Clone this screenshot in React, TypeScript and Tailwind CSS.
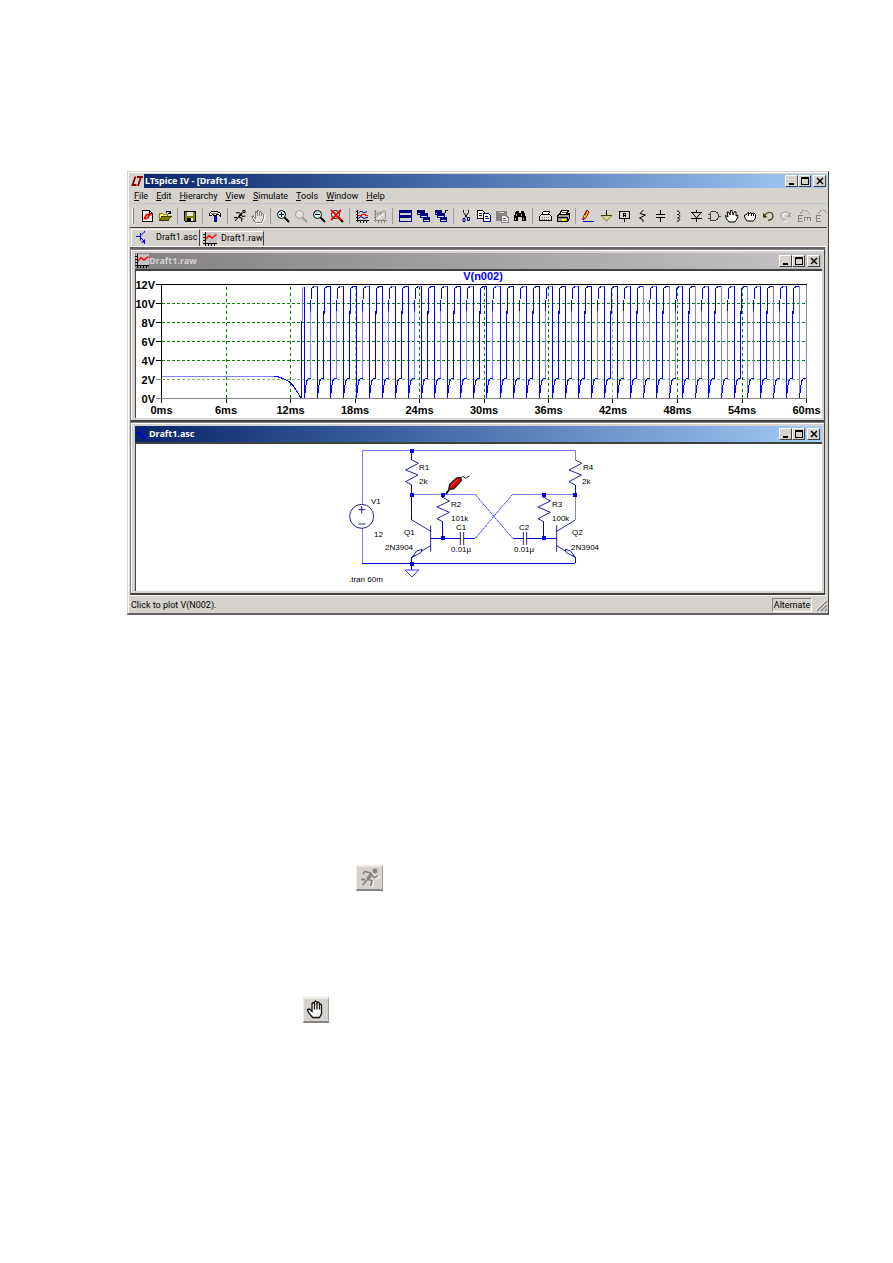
import type { ReactNode } from "react";

const UI = "font-['Roboto','Liberation_Sans',sans-serif] text-[9px]";

function Glyph({ children }: { children: ReactNode }) {
  return (
    <svg viewBox="0 0 16 16" className="block size-4 shrink-0" fill="none" stroke="#000" strokeWidth="1" shapeRendering="crispEdges" aria-hidden="true">
      {children}
    </svg>
  );
}

const HAND = "M5 14L3 11L2 8.500L3.500 8L5 10V4.500L6 3.500L7 4.500V3L8 2L9 3V4L10 3L11 4V5.500L12 5L13 6V11L11.500 14Z";
const HAND_LINES = "M7 4.500V8M9 4V8M11 5.500V8";

function Magnifier({ color = "#000", mark = "#008080", fill = "#dff" }: { color?: string; mark?: string; fill?: string }) {
  return (
    <g shapeRendering="auto">
      <circle cx="6.5" cy="6.500" r="4" stroke={color} fill={fill} />
      <path d="M9.500 9.500L14 14" stroke={color} strokeWidth="2" />
      <path d="M5 5.500l2-1.500" stroke={mark} strokeWidth=".6" />
    </g>
  );
}

function TraceIcon() {
  return (
    <svg viewBox="0 0 14 14" className="block size-[14px] shrink-0" shapeRendering="crispEdges" aria-hidden="true">
      <rect x="1" width="13" height="11" fill="#c6c3c6" />
      <path d="M2.500 0V14M0 11.500H14" stroke="#000" fill="none" />
      <path d="M0 2.500H2M0 5.500H2M0 8.500H2M5.500 12V14M8.500 12V14M11.500 12V14" stroke="#000" fill="none" />
      <path d="M3 7L6 3.500L9 6L13.500 2.500" stroke="#f00" strokeWidth="1.500" fill="none" shapeRendering="auto" />
    </svg>
  );
}

function TransistorIcon() {
  return (
    <svg viewBox="0 0 14 14" className="block size-[14px] shrink-0" fill="none" stroke="#00f" aria-hidden="true">
      <path d="M1 5.500H5M5.500 2V9.500M6 4.500L9.500 1V0M6 7L9.500 10.500V13" />
      <path d="M6 11.500H10V8Z" fill="#00f" stroke="none" />
    </svg>
  );
}

type Tool = { label: string; icon: ReactNode };

const toolGroups: Tool[][] = [
  [
    {
      label: "New schematic",
      icon: (
        <Glyph>
          <path d="M3.500 2.500H10.500L13.500 5.500V13.500H3.500Z" fill="#fff" />
          <path d="M10.500 2.500V5.500H13.500" />
          <path d="M7.500 6.500L5.500 10.500H8M7.500 6.500H12.500M10.500 6.500L8.500 10.500" stroke="#f00" strokeWidth="1.800" shapeRendering="auto" />
        </Glyph>
      ),
    },
    {
      label: "Open",
      icon: (
        <Glyph>
          <path d="M2.500 12.500V5.500H5.500L6.500 6.500H10.500V8" fill="#ff8" stroke="#808000" />
          <path d="M2.500 12.500L5 8.500H14L11 12.500Z" fill="#808000" stroke="#404000" />
          <path d="M9 4.500L10 3.500H12L13.500 5.500M13.500 3V5.500H11" />
        </Glyph>
      ),
    },
  ],
  [
    {
      label: "Save",
      icon: (
        <Glyph>
          <path d="M2.500 3.500H13.500V13.500H3.500L2.500 12.500Z" fill="#808000" />
          <rect x="5" y="4" width="6" height="4" fill="#e4e4e4" stroke="none" />
          <rect x="5" y="10" width="6" height="3" fill="#000" stroke="none" />
          <rect x="9" y="10" width="2" height="3" fill="#fff" stroke="none" />
        </Glyph>
      ),
    },
  ],
  [
    {
      label: "Control panel",
      icon: (
        <Glyph>
          <path d="M2.500 7.500V5.500L4.500 3.500H10L13.500 5.500V8.500L11.500 6.500H10L9 7.500H7L6 6.500L4 8Z" fill="#fff" />
          <path d="M4 5.500H11" stroke="#808080" />
          <path d="M7 8H10V14H7Z" fill="#000080" stroke="none" />
          <path d="M8.500 8V13" stroke="#00f" />
        </Glyph>
      ),
    },
  ],
  [
    {
      label: "Run",
      icon: (
        <Glyph>
          <g shapeRendering="auto" strokeWidth="1.100">
            <path d="M9.500 5L6.500 9L3 13M8 5L4 4.500M9 6.500L10.500 8.500L13.500 8M7 9L10 10.500L9.500 13.500M2 9.500H5" />
            <circle cx="12" cy="3.500" r="1.200" />
            <path d="M10 5L7 8.500" strokeWidth="1.800" />
          </g>
        </Glyph>
      ),
    },
    {
      label: "Halt",
      icon: (
        <Glyph>
          <path d={HAND} stroke="#fff" transform="translate(1 1)" />
          <path d={HAND} stroke="#848284" fill="#e4e0d8" />
          <path d={HAND_LINES} stroke="#848284" />
        </Glyph>
      ),
    },
  ],
  [
    {
      label: "Zoom in",
      icon: (
        <Glyph>
          <Magnifier />
          <path d="M4 6.500H9M6.500 4V9" />
        </Glyph>
      ),
    },
    {
      label: "Pan",
      icon: (
        <Glyph>
          <Magnifier color="#999" mark="#fff" fill="#e4e0d8" />
        </Glyph>
      ),
    },
    {
      label: "Zoom out",
      icon: (
        <Glyph>
          <Magnifier />
          <path d="M4 6.500H9" />
        </Glyph>
      ),
    },
    {
      label: "Zoom to fit",
      icon: (
        <Glyph>
          <Magnifier />
          <path d="M2 2L12 12M12 2L2 12" stroke="#f00" strokeWidth="1.800" shapeRendering="auto" />
        </Glyph>
      ),
    },
  ],
  [
    {
      label: "Autorange",
      icon: (
        <Glyph>
          <path d="M3.500 2V14M2 12.500H15M2 3.500H3M2 6.500H3M2 9.500H3M6.500 13V15M9.500 13V15M12.500 13V15" />
          <path d="M4 5.500L6 3.500H8L10 5L13 3.500M4 10.500L7 8.500L10 10.500L14 9" stroke="#00007b" shapeRendering="auto" />
          <path d="M4 7.500H7L8 6.500H11L12 7.500H14" stroke="#f00" />
        </Glyph>
      ),
    },
    {
      label: "Pick visible traces",
      icon: (
        <Glyph>
          <path d="M3.500 2V14M2 12.500H15M2 3.500H3M2 6.500H3M2 9.500H3M6.500 13V15M9.500 13V15M12.500 13V15" stroke="#848284" />
          <path d="M5 9L7 4H9L8 7L11 3H13.500V10L11 12M5 4V7" stroke="#999" shapeRendering="auto" />
          <path d="M6 10L9 8L12 6" stroke="#fff" />
        </Glyph>
      ),
    },
  ],
  [
    {
      label: "Tile windows",
      icon: (
        <Glyph>
          <path d="M2.500 2.500H14.500V13.500H2.500ZM2.500 7.500H14.500" stroke="#000080" />
          <path d="M2 3.500H15M2 8.500H15" stroke="#000080" strokeWidth="2" />
        </Glyph>
      ),
    },
    {
      label: "Cascade windows",
      icon: (
        <Glyph>
          <path d="M2.500 2.500H9.500V6.500H2.500ZM5.500 5.500H12.500V9.500H5.500ZM8.500 9.500H14.500V13.500H8.500Z" stroke="#000080" fill="#d6d3ce" />
          <path d="M2 3.500H10M5 6.500H13M8 10.500H15" stroke="#000080" strokeWidth="2" />
        </Glyph>
      ),
    },
    {
      label: "Close all windows",
      icon: (
        <Glyph>
          <path d="M2.500 2.500H8.500V6.500H2.500ZM4.500 5.500H11.500V9.500H4.500ZM7.500 9.500H13.500V13.500H7.500Z" stroke="#000080" fill="#d6d3ce" />
          <path d="M2 3.500H9M4 6.500H12M7 10.500H14" stroke="#000080" strokeWidth="2" />
          <path d="M12 2.500H15M12.500 2V5" />
        </Glyph>
      ),
    },
  ],
  [
    {
      label: "Cut",
      icon: (
        <Glyph>
          <path d="M5.500 2V4.500L9 9.500M10.500 2V4.500L7 9.500" shapeRendering="auto" />
          <path d="M5 10.500h2v3h-2zM9.500 9.500h2v3h-2z" stroke="#00007b" shapeRendering="auto" />
        </Glyph>
      ),
    },
    {
      label: "Copy",
      icon: (
        <Glyph>
          <path d="M1.500 2.500H6.500L8.500 4.500V10.500H1.500Z" fill="#fff" />
          <path d="M3 5.500H6M3 7.500H6" />
          <path d="M7.500 5.500H12.500L14.500 7.500V13.500H7.500Z" fill="#fff" stroke="#000080" />
          <path d="M9 8.500H12M9 10.500H13" stroke="#000080" />
        </Glyph>
      ),
    },
    {
      label: "Paste",
      icon: (
        <Glyph>
          <path d="M2.500 3.500H12.500V12.500H2.500Z" fill="#848284" stroke="#848284" />
          <path d="M5 4.500H10" stroke="#d6d3ce" />
          <path d="M7.500 7.500H12L14.500 10V14.500H7.500Z" fill="#eee" stroke="#848284" />
          <path d="M9 10.500H12M9 12.500H13" stroke="#848284" />
        </Glyph>
      ),
    },
    {
      label: "Find",
      icon: (
        <Glyph>
          <path d="M4 3H7V5H9V3H12L14 9V13H10V9H6V13H2V9Z" fill="#000" stroke="none" />
          <path d="M4.500 6V8M9.500 6V8M3.500 10V12M11.500 10V12" stroke="#aaa" />
        </Glyph>
      ),
    },
  ],
  [
    {
      label: "Print setup",
      icon: (
        <Glyph>
          <path d="M4.500 6.500L6.500 3.500H12.500L11.500 6.500" fill="#fff" />
          <path d="M2.500 8.500L4.500 6.500H12.500L14.500 8.500V12.500H2.500Z" fill="#e4e0d8" />
          <path d="M5 9.500H12M5 11.500H12" stroke="#777" strokeDasharray="1 1" />
        </Glyph>
      ),
    },
    {
      label: "Print",
      icon: (
        <Glyph>
          <path d="M4.500 6.500L6.500 2.500H13.500L11.500 6.500" fill="#fff" />
          <path d="M7 4.500H12" stroke="#555" />
          <path d="M2.500 7.500L4.500 6.500H12.500L14.500 5.500V10.500L12.500 13.500H2.500Z" fill="#9c9a9c" />
          <path d="M2.500 9.500H12.500V13.500" />
          <path d="M7 11.500H11" stroke="#ff0" strokeWidth="2" />
        </Glyph>
      ),
    },
  ],
  [
    {
      label: "Draw wire",
      icon: (
        <Glyph>
          <g shapeRendering="auto">
            <path d="M7 2L3.500 8.500L3 12L6 9.500L9 4Z" fill="#ff0" stroke="#800000" />
            <path d="M7 3L5 7M3 12L4 9" stroke="#f00" strokeWidth="1.500" />
          </g>
          <path d="M3 13.500H14" stroke="#00f" />
        </Glyph>
      ),
    },
    {
      label: "Ground",
      icon: (
        <Glyph>
          <path d="M8.500 2V7" />
          <path d="M3 7.500H14L8.500 13Z" stroke="#808000" fill="#d6d3a0" shapeRendering="auto" />
          <path d="M3 7.500H14" stroke="#404000" />
        </Glyph>
      ),
    },
    {
      label: "Label net",
      icon: (
        <Glyph>
          <path d="M3.500 3.500H13.500V10.500H3.500ZM8.500 11V14" />
          <path d="M7.500 9V5.500H9.500V9M7 7.500H10" />
        </Glyph>
      ),
    },
    {
      label: "Resistor",
      icon: (
        <Glyph>
          <path d="M9.500 2L6 5.500L11.500 7L5.500 10L9 12V14" shapeRendering="auto" />
        </Glyph>
      ),
    },
    {
      label: "Capacitor",
      icon: (
        <Glyph>
          <path d="M8.500 2V6M8.500 10V14M4 6.500H13M4 9.500H13" />
        </Glyph>
      ),
    },
    {
      label: "Inductor",
      icon: (
        <Glyph>
          <path d="M7 3C11 3 10 6.500 7.500 6.500C11 6.500 10 10 7.500 10C11 10 10 13.500 7 13" shapeRendering="auto" />
        </Glyph>
      ),
    },
    {
      label: "Diode",
      icon: (
        <Glyph>
          <path d="M8.500 2V4M8.500 10V14M3 4.500H14M3 10.500H14" />
          <path d="M4 4.500L8.500 10L13 4.500" shapeRendering="auto" />
        </Glyph>
      ),
    },
    {
      label: "Component",
      icon: (
        <Glyph>
          <path d="M4.500 4V12.500H8C11 12.500 12.500 10 12.500 8C12.500 6 11 3.500 8 3.500H4.500M2 6.500H4M2 10.500H4M13 8.500H15" stroke="#444" />
        </Glyph>
      ),
    },
    {
      label: "Move",
      icon: (
        <Glyph>
          <path d="M5 14L2 10L1.500 7.500L4 9L3 4L4.500 4L6 7L6.500 2.500H8L9 7L10.500 3.500L12 4V8L13.500 7L14 9L11 14Z" fill="#fff" shapeRendering="auto" />
        </Glyph>
      ),
    },
    {
      label: "Drag",
      icon: (
        <Glyph>
          <path d="M5 13L2.500 9V7H4L5 5.500L6 4.500L7.500 5.500L9 4.500L10 5.500L12 5L13.500 6.500V10L11.500 13Z" fill="#fff" shapeRendering="auto" />
          <path d="M6.500 5V8M9 5V8M11.500 6V8" />
        </Glyph>
      ),
    },
    {
      label: "Undo",
      icon: (
        <Glyph>
          <g shapeRendering="auto">
            <path d="M5 7C7 3.500 13 3.500 13 8C13 11 10.500 12.500 8 12" stroke="#333300" strokeWidth="1.200" />
            <path d="M3 5V9.500H7.500Z" fill="#333300" stroke="none" />
          </g>
        </Glyph>
      ),
    },
    {
      label: "Redo",
      icon: (
        <Glyph>
          <g shapeRendering="auto">
            <path d="M13 8C10 4 4 4.500 4 9C4 12 6.500 13.500 9 13" stroke="#fff" strokeWidth="1.500" />
            <path d="M12 7C10 3 3 3.500 3 8C3 11 5.500 12.500 8 12" stroke="#aaa" strokeWidth="1.500" />
            <path d="M13 4V9H8Z" fill="#aaa" stroke="none" />
          </g>
        </Glyph>
      ),
    },
    {
      label: "Rotate",
      icon: (
        <Glyph>
          <path d="M7 7.500H2.500V13.500H7M3 10.500H6M8 9.500H15M8.500 9V13M11.500 9V12M14.500 9V13" stroke="#848284" />
          <path d="M4 5.500L7 2.500H11L13 5V7" stroke="#999" strokeDasharray="2 1" />
        </Glyph>
      ),
    },
    {
      label: "Mirror",
      icon: (
        <Glyph>
          <path d="M7 7.500H2.500V13.500H7M3 10.500H6" stroke="#848284" />
          <path d="M4 5.500L7 2.500H11L13 5" stroke="#999" strokeDasharray="2 1" />
        </Glyph>
      ),
    },
  ],
];

const raised = "border border-t-white border-l-white border-r-[#424142] border-b-[#424142] bg-[#d6d3ce]";

function CaptionButtons() {
  return (
    <div className="flex">
      <button type="button" aria-label="Minimize" className={`flex h-3 w-[13px] items-center justify-center ${raised}`}>
        <svg viewBox="0 0 10 10" className="size-[10px]" aria-hidden="true"><path d="M2 7H7V9H2Z" /></svg>
      </button>
      <button type="button" aria-label="Maximize" className={`flex h-3 w-[13px] items-center justify-center ${raised}`}>
        <svg viewBox="0 0 10 10" className="size-[10px]" fill="none" stroke="#000" shapeRendering="crispEdges" aria-hidden="true"><path d="M1.500 1.500H8.500V8.500H1.500ZM1 2.500H9" /></svg>
      </button>
      <button type="button" aria-label="Close" className={`ml-0.5 flex h-3 w-[13px] items-center justify-center ${raised}`}>
        <svg viewBox="0 0 10 10" className="size-[10px]" fill="none" stroke="#000" strokeWidth="1.500" aria-hidden="true"><path d="M2 2L8 8M8 2L2 8" /></svg>
      </button>
    </div>
  );
}

const AXIS = { left: 25.5, right: 670.5, top: 13.5, bottom: 127.5 };
const voltY = (v: number) => AXIS.bottom - (v / 12) * (AXIS.bottom - AXIS.top);
const timeX = (t: number) => AXIS.left + (t / 60) * (AXIS.right - AXIS.left);
const PERIOD = 13.034;
const cycles = Array.from({ length: 39 }, (_, i) => Math.round(168 + i * PERIOD) + 0.5);

function Plot() {
  return (
    <svg viewBox="0 0 686 147" className="block h-auto w-full bg-white" role="img" aria-label="Plot of V(n002)" shapeRendering="crispEdges">
      <g stroke="#008200" fill="none">
        {[2, 4, 6, 8, 10].map((v) => (
          <path key={v} d={`M${AXIS.left} ${Math.floor(voltY(v)) + 0.5}H${AXIS.right}`} strokeDasharray="3 2" stroke={v === 2 ? "#7fc07f" : "#008200"} />
        ))}
        {[6, 12, 18, 24, 30, 36, 42, 48, 54].map((t) => (
          <path key={t} d={`M${Math.floor(timeX(t)) + 0.5} 16V${AXIS.bottom}`} strokeDasharray="3 3" stroke={t === 18 || t === 42 ? "#7fc07f" : "#008200"} />
        ))}
      </g>
      <g stroke="#000" fill="none">
        <path d={`M${AXIS.left} ${AXIS.bottom}V${AXIS.top}H${AXIS.right}`} />
        <path d={`M${AXIS.left} ${AXIS.bottom}H${AXIS.right}V${AXIS.top}`} stroke="#848284" />
        {[0, 2, 4, 6, 8, 10, 12].map((v) => (
          <path key={v} d={`M20 ${Math.floor(voltY(v)) + 0.5}H26`} stroke={v === 0 || v === 2 ? "#848284" : "#000"} />
        ))}
        {[0, 6, 12, 18, 24, 30, 36, 42, 48, 54, 60].map((t) => (
          <path key={t} d={`M${Math.floor(timeX(t)) + 0.5} 128V132`} />
        ))}
      </g>
      <g fill="none" stroke="#0000ff">
        <path d="M26 105.500H138" stroke="#8080ff" />
        <path d="M138 105.500H141L147 107.500L153 110.500L157 114.500L161 120.500L165 127" />
        <path d="M165.500 127V50M168.500 15.500V127" />
        <path d="M166.500 50V15.500" stroke="#8080ff" />
        {cycles.map((x, i) => {
          const next = i < cycles.length - 1 ? cycles[i + 1] : AXIS.right;
          const last = i === cycles.length - 1;
          return (
            <g key={x}>
              <path d={`M${x} 127L${x + 1} 118L${x + 2} 110L${x + 4} 107.500H${x + 6}`} />
              {!last && (
                <>
                  <path d={`M${x + 6} 107V40`} stroke={i % 2 ? "#0000ff" : "#8080ff"} />
                  <path d={`M${x + 6} ${i % 2 ? 70 : 40}L${x + 7} 18L${x + 8} 16.500L${x + 10} 15.500H${next}`} />
                  <path d={`M${x + 9} 15.500H${next}`} stroke={i % 2 ? "#0000ff" : "#8080ff"} />
                  <path d={`M${next} 15V127`} stroke={i > 24 && i % 2 ? "#8080ff" : "#0000ff"} />
                </>
              )}
              {last && <path d={`M${AXIS.right} 107V76`} stroke="#8080ff" />}
            </g>
          );
        })}
      </g>
      <g className="font-['Liberation_Sans',sans-serif] text-[11px] font-bold" textAnchor="end">
        {[0, 2, 4, 6, 8, 10, 12].map((v) => (
          <text key={v} x="19" y={voltY(v) + 4}>{v}V</text>
        ))}
      </g>
      <g className="font-['Liberation_Sans',sans-serif] text-[11px] font-bold" textAnchor="middle">
        {[0, 6, 12, 18, 24, 30, 36, 42, 48, 54, 60].map((t) => (
          <text key={t} x={timeX(t)} y="143">{t}ms</text>
        ))}
        <text x="347" y="9" fill="#0000ff">V(n002)</text>
      </g>
    </svg>
  );
}

const partLabels: [number, number, string][] = [
  [283, 26, "R1"], [283, 40, "2k"], [235, 60, "V1"], [238, 93, "12"],
  [315, 63, "R2"], [315, 77, "101k"], [268, 91, "Q1"], [249, 106, "2N3904"],
  [320, 86, "C1"], [315, 108, "0.01µ"], [383, 86, "C2"], [378, 108, "0.01µ"],
  [416, 63, "R3"], [416, 77, "100k"], [436, 91, "Q2"], [435, 106, "2N3904"],
  [447, 26, "R4"], [446, 40, "2k"], [213, 138, ".tran 60m"],
];

const nodes: [number, number][] = [[216, 33], [216, 165], [309, 165], [309, 295], [612, 165], [612, 295], [706, 165], [216, 371]];

function Schematic() {
  return (
    <svg viewBox="0 0 686 147" className="block h-auto w-full bg-white" role="img" aria-label="Astable multivibrator schematic">
      <g transform="translate(204 -4) scale(.33333)" fill="none" strokeWidth="3">
        <g stroke="#7b7dff" shapeRendering="crispEdges">
          <path d="M67 193V31H706V60M67 265V370M216 165H407M516 165H706M706 165V240" />
        </g>
        <g stroke="#3c3cff">
          <path d="M407 165L518 295M406 295L516 165" strokeDasharray="9 2" />
        </g>
        <g stroke="#0000e0" shapeRendering="crispEdges">
          <path d="M67 370H706M216 31V60M216 135V240M309 245V295M612 245V295M706 135V165M216 352V390M706 352V370M272 295H360M371 295H406M518 295H549M560 295H650M309 165V174M612 165V174" />
        </g>
        <g stroke="#00008b" strokeWidth="2.600">
          <circle cx="65" cy="229" r="36" />
          <path d="M55 209H76M65 198V220M55 252H76" />
          <path d="M216 60L235 70L197 90L234 105L197 125L216 135" />
          <path d="M706 60L725 70L687 90L724 105L687 125L706 135" />
          <path d="M309 172L328 183L291 201L328 217L291 236L309 246" />
          <path d="M612 172L631 183L594 201L631 217L594 236L612 246" />
          <path d="M272 256V335M650 256V335M361 276V315M371 276V315M550 276V315M560 276V315" />
          <path d="M216 240L272 274M706 240L650 274M272 317L244 334M650 317L678 334M216 352L226 346M706 352L696 346" />
          <path d="M217 351L230 333L246 328L243 338ZM705 351L692 333L676 328L679 338Z" />
        </g>
        <path d="M195 390H236L216 411Z" stroke="#3434ff" />
        <g fill="#0000ff" shapeRendering="crispEdges">
          {nodes.map(([x, y]) => (
            <rect key={`${x}-${y}`} x={x - 6} y={y - 6} width="12" height="12" />
          ))}
        </g>
        <path d="M318 163L328 148" stroke="#000" strokeWidth="5" />
        <path d="M326 149L329 133L350 114L362 113L364 122L342 146Z" fill="#e00000" stroke="#222" strokeWidth="4" />
        <path d="M333 137L353 118" stroke="#ff5050" strokeWidth="3" />
        <path d="M360 116L368 109L377 115L389 107" stroke="#222" />
      </g>
      <g className="font-['Liberation_Sans',sans-serif] text-[8px]">
        {partLabels.map(([x, y, label], i) => (
          <text key={i} x={x} y={y}>{label}</text>
        ))}
      </g>
    </svg>
  );
}

function ChildWindow({ title, icon, active, children }: { title: string; icon: ReactNode; active?: boolean; children: ReactNode }) {
  return (
    <section className="border border-[#848284] border-r-[#424142] border-b-2 border-b-[#424142] bg-[#d6d3ce]">
      <div className="border border-t-white border-l-white border-r-[#d6d3ce] border-b-[#d6d3ce] pt-0.5 pr-px pb-px pl-[3px]">
        <header
          className={`flex h-4 items-center pr-0.5 ${active ? "bg-linear-to-r from-[#08246b] to-[#a5cbf7]" : "bg-linear-to-r from-[#848284] to-[#c6c3c6]"}`}
        >
          {icon}
          <h2 className={`flex-1 font-['Noto_Sans',sans-serif] text-[9px] leading-[14px] font-bold ${active ? "text-white" : "text-[#d6d3ce]"}`}>{title}</h2>
          <CaptionButtons />
        </header>
        <div className="border-t-2 border-l border-[#424142]">{children}</div>
      </div>
    </section>
  );
}

const menus = ["File", "Edit", "Hierarchy", "View", "Simulate", "Tools", "Window", "Help"];

export default function App() {
  return (
    <main className="min-h-screen bg-white pt-[171px] pb-60 text-black">
      <div className="mr-16 ml-[127px] border border-t-[#d6d3ce] border-r-[#424142] border-b-2 border-b-[#636163] border-l-[#d6d3ce] bg-[#d6d3ce]">
        <div className="border-t border-l border-white p-px pb-0">
          <header className="flex h-[14px] items-center bg-linear-to-r from-[#08246b] to-[#a5cbf7] pr-px">
            <svg viewBox="0 0 14 14" className="size-[14px] shrink-0" aria-hidden="true">
              <rect width="14" height="14" fill="#d6d3ce" />
              <path d="M5.500 2.500L2.500 11H6.500" fill="none" stroke="#840000" strokeWidth="1.800" />
              <path d="M7 3H13M11 3L8 12" fill="none" stroke="#840000" strokeWidth="1.800" />
            </svg>
            <h1 className="ml-px flex-1 font-['Noto_Sans',sans-serif] text-[9px] leading-[14px] font-bold text-white">LTspice IV - [Draft1.asc]</h1>
            <CaptionButtons />
          </header>
          <nav className={`flex h-4 items-center gap-2 border-b border-[#bdc3ce] pl-1 leading-3 ${UI}`}>
            {menus.map((m) => (
              <button key={m} type="button">
                <span className="underline">{m[0]}</span>
                {m.slice(1)}
              </button>
            ))}
          </nav>
          <div className="flex h-6 items-center overflow-hidden border-b border-[#424142]" role="toolbar" aria-label="Standard">
            <span className="ml-0.5 h-4 w-0.5 shrink-0 border-r border-l border-r-[#848284] border-l-white" />
            <div className="ml-1 flex min-w-0 flex-1 overflow-hidden">
              {toolGroups.map((group, g) => (
                <div key={g} className="flex shrink-0 items-center">
                  {g > 0 && <span className="mx-[3px] h-4 w-px bg-[#9c9a9c]" />}
                  {group.map((tool) => (
                    <button key={tool.label} type="button" aria-label={tool.label} className="flex w-[18px] shrink-0 justify-center">
                      {tool.icon}
                    </button>
                  ))}
                </div>
              ))}
            </div>
          </div>
          <div className={`flex h-[19px] items-end gap-px border-b border-white pl-px ${UI}`} role="tablist">
            <button type="button" role="tab" aria-selected="true" className="flex h-[17px] w-[69px] items-center gap-[7px] border-t border-r border-l border-t-white border-r-[#424142] border-l-white pb-px pl-[3px]">
              <TransistorIcon />
              Draft1.asc
            </button>
            <button type="button" role="tab" aria-selected="false" className="flex h-[15px] w-[63px] items-center gap-1 border border-t-white border-r-[#424142] border-b-transparent border-l-white pl-px">
              <TraceIcon />
              Draft1.raw
            </button>
          </div>
          <div className="mr-0.5 border-t-2 border-[#636163]">
            <ChildWindow title="Draft1.raw" icon={<TraceIcon />}>
              <Plot />
            </ChildWindow>
            <ChildWindow title="Draft1.asc" icon={<TransistorIcon />} active>
              <Schematic />
            </ChildWindow>
          </div>
          <footer className={`flex h-[18px] items-center border-t border-white pl-px leading-3 ${UI}`}>
            <p className="flex-1">Click to plot V(N002).</p>
            <p className="w-10 border border-t-[#848284] border-r-white border-b-white border-l-[#848284] text-center">Alternate</p>
            <svg viewBox="0 0 12 14" className="ml-[3px] h-[14px] w-3" stroke="#848284" fill="none" aria-hidden="true">
              <path d="M2 13L12 3M6 13L12 7M10 13L12 11" strokeWidth="1.500" />
              <path d="M1 12L11 2M5 12L11 6" stroke="#fff" strokeWidth=".8" />
            </svg>
          </footer>
        </div>
      </div>
      <button type="button" aria-label="Run simulation" className="mt-[250px] ml-[356px] flex h-[26px] w-[27px] items-center justify-center border-t-2 border-r border-b-2 border-l border-t-[#eeebe6] border-r-[#9c9a9c] border-b-[#848284] border-l-[#eeebe6] bg-[#d6d3ce]">
        <svg viewBox="0 0 22 22" className="size-[22px]" fill="none" stroke="#848284" strokeWidth="1.800" aria-hidden="true">
          <path d="M14 7L17 11L20.500 9.500M9 12L14 14.500L13 20" stroke="#fff" />
          <circle cx="16" cy="4" r="1.500" fill="#848284" />
          <path d="M12 6L6 4.500L4 7M12.500 7.500L15.500 10.500L19 9M8.500 12L13 14L12 19M2 12.500H6" />
          <path d="M13 6.500L8.500 12" strokeWidth="3.200" />
          <path d="M9 12L3.500 18" />
        </svg>
      </button>
      <button type="button" aria-label="Halt simulation" className="mt-[106px] ml-[303px] flex h-[26px] w-[26px] items-center justify-center border-t-2 border-r border-b-2 border-l border-t-[#eeebe6] border-r-[#9c9a9c] border-b-[#848284] border-l-[#eeebe6] bg-[#d6d3ce]">
        <svg viewBox="0 0 22 22" className="size-[22px]" fill="#fff" stroke="#111" strokeWidth="1.300" aria-hidden="true">
          <path d="M7.500 18.500L3.500 13.500L2.500 10.500L4.500 10L7 12.500V4.500L8 3.500L9.500 4.500V3L10.500 2L12 3V4L13 3L14.500 4V5.500L15.500 5L16.500 6V14.500L14.500 18.500Z" />
          <path d="M9.500 4.500V10.500M12 3.500V10.500M14.500 5V10.500" fill="none" />
        </svg>
      </button>
    </main>
  );
}
